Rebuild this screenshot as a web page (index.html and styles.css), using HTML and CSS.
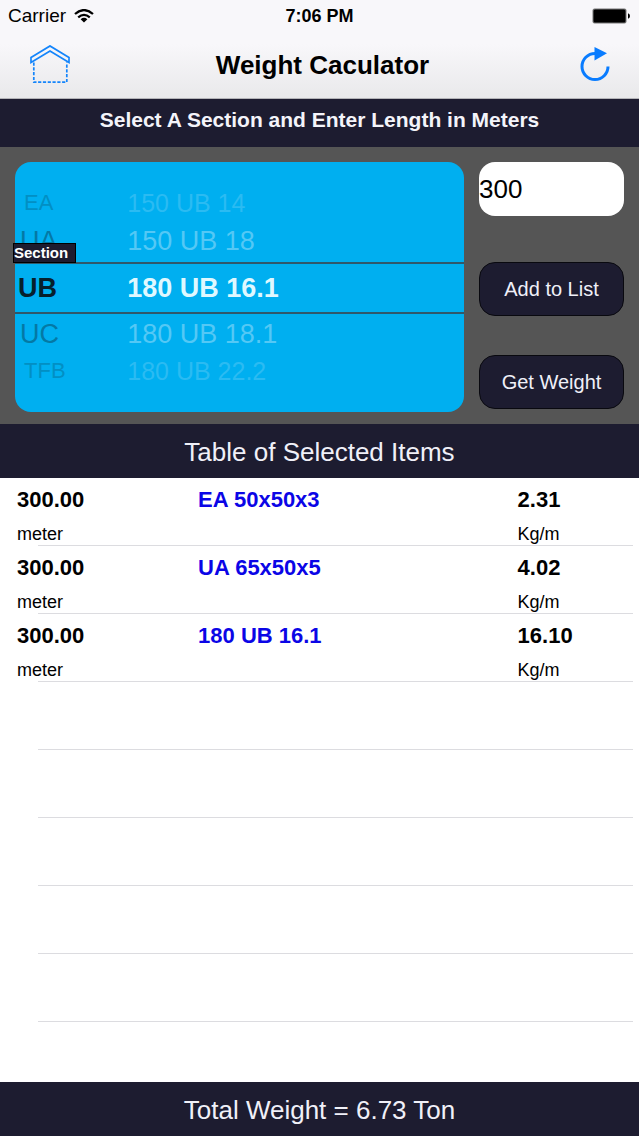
FILE: index.html
```html
<!DOCTYPE html>
<html lang="en">
<head>
<meta charset="utf-8">
<meta name="viewport" content="width=device-width, initial-scale=1">
<title>Weight Caculator</title>
<link rel="stylesheet" href="styles.css">
</head>
<body>
<header class="top">
  <div class="status">
    <span class="carrier">Carrier
      <svg class="wifi" width="20" height="14" viewBox="0 0 20 14" aria-hidden="true"><g fill="none" stroke="#000" stroke-width="2.3"><path d="M1 5Q10-2.8 19 5"/><path d="M4.2 8.3Q10 3.4 15.8 8.3"/></g><path d="M6.6 10.2Q10 7.4 13.4 10.2L10 13.6Z"/></svg>
    </span>
    <span class="clock">7:06 PM</span>
    <svg class="battery" width="39" height="16" viewBox="0 0 39 16" aria-hidden="true"><rect x=".5" y=".5" width="34" height="15" rx="2" fill="#777"/><rect x="1.5" y="1.5" width="32" height="13" rx="1.5"/><path d="M36 5.2Q38 5.7 38 8T36 10.8Z"/></svg>
  </div>
  <nav class="bar">
    <button class="icon" type="button" aria-label="Home">
      <svg width="40" height="40" viewBox="0 0 40 40" fill="none" stroke="#1485fb" stroke-width="1.7" aria-hidden="true"><path d="M1 12.5 20 .9 39 12.5V17.6L20 6 1 17.6Z"/><path d="M3.8 17.5V37.2H36.8V17.5" stroke-dasharray="3.2 1.6"/></svg>
    </button>
    <h1>Weight Caculator</h1>
    <button class="icon" type="button" aria-label="Reset">
      <svg width="40" height="40" viewBox="0 0 40 40" aria-hidden="true"><path d="M33 21.5A13 13 0 1 1 20 8.5" fill="none" stroke="#097cff" stroke-width="3"/><path d="M19.5 2 32 8.2 19.5 15.5Z" fill="#097cff"/></svg>
    </button>
  </nav>
</header>
<main>
  <h2 class="prompt">Select A Section and Enter Length in Meters</h2>
  <section class="panel">
    <div class="picker">
      <ul class="wheel" role="listbox" aria-label="Section">
        <li class="far" role="option">EA</li>
        <li class="near" role="option">UA</li>
        <li class="current" role="option" aria-selected="true">UB</li>
        <li class="near" role="option">UC</li>
        <li class="far" role="option">TFB</li>
      </ul>
      <ul class="wheel sizes" role="listbox" aria-label="Size">
        <li class="far" role="option">150 UB 14</li>
        <li class="near" role="option">150 UB 18</li>
        <li class="current" role="option" aria-selected="true">180 UB 16.1</li>
        <li class="near" role="option">180 UB 18.1</li>
        <li class="far" role="option">180 UB 22.2</li>
      </ul>
      <span class="tag">Section</span>
    </div>
    <form class="controls">
      <input class="length" type="text" value="300" aria-label="Length in meters">
      <button class="action" type="button">Add to List</button>
      <button class="action" type="button">Get Weight</button>
    </form>
  </section>
  <h2 class="heading">Table of Selected Items</h2>
  <table class="items">
    <tbody>
      <tr><td><b>300.00</b><small>meter</small></td><td class="name"><b>EA 50x50x3</b></td><td><b>2.31</b><small>Kg/m</small></td></tr>
      <tr><td><b>300.00</b><small>meter</small></td><td class="name"><b>UA 65x50x5</b></td><td><b>4.02</b><small>Kg/m</small></td></tr>
      <tr><td><b>300.00</b><small>meter</small></td><td class="name"><b>180 UB 16.1</b></td><td><b>16.10</b><small>Kg/m</small></td></tr>
      <tr><td colspan="3"></td></tr>
      <tr><td colspan="3"></td></tr>
      <tr><td colspan="3"></td></tr>
      <tr><td colspan="3"></td></tr>
      <tr><td colspan="3"></td></tr>
    </tbody>
  </table>
</main>
<footer class="heading">Total Weight = 6.73 Ton</footer>
</body>
</html>
```
FILE: styles.css
```css
* { box-sizing: border-box; }

body {
  margin: 0;
  min-height: 100vh;
  display: flex;
  flex-direction: column;
  background: #fff;
  color: #000;
  font-family: "Liberation Sans", Arial, sans-serif;
}

main { flex: 1; }
h1, h2, ul { margin: 0; padding: 0; }
button, input { font-family: inherit; border: 0; padding: 0; }

.top {
  background: linear-gradient(#f8f7fa 45%, #e9e9eb);
  border-bottom: 1px solid #b4b4b8;
}

.status {
  display: grid;
  grid-template-columns: 1fr auto 1fr;
  align-items: center;
  height: 32px;
  padding: 0 8px;
}

.carrier {
  display: flex;
  align-items: center;
  gap: 8px;
  font-size: 19px;
}

.clock { font-size: 18px; font-weight: bold; }
.battery { justify-self: end; }

.bar {
  display: grid;
  grid-template-columns: 1fr auto 1fr;
  align-items: center;
  height: 66px;
  padding: 0 24px 0 30px;
}

.bar h1 { font-size: 26px; line-height: 32px; }

.icon {
  width: 40px;
  height: 40px;
  background: none;
}

.icon:last-child { justify-self: end; }
.icon svg { display: block; }

.prompt {
  padding: 5px 16px 11px;
  background: #1d1c30;
  color: #f4f4fa;
  font-size: 21px;
  line-height: 32px;
  text-align: center;
}

.panel {
  display: flex;
  gap: 15px;
  padding: 15px 15px 12px;
  background: #555;
}

.picker {
  position: relative;
  flex: 1;
  display: grid;
  grid-template-columns: 1fr 3fr;
  padding: 24px 0;
  background: #00aff0;
  border-radius: 16px;
}

.wheel {
  display: grid;
  grid-template-rows: 34px 42px 52px 40px 34px;
  list-style: none;
  white-space: nowrap;
}

.wheel li { display: flex; align-items: center; }

.far {
  padding-left: 9px;
  color: #028fc4;
  font-size: 22px;
}

.near {
  padding-left: 5px;
  color: #0479a5;
  font-size: 27px;
}

.wheel .current {
  padding-left: 3px;
  border-top: 2px solid #30586b;
  border-bottom: 2px solid #30586b;
  color: #06202c;
  font-size: 27px;
  font-weight: bold;
}

.sizes .far { padding-left: 0; color: #2bbbf2; font-size: 25px; }
.sizes .near { padding-left: 0; color: #54c8f5; }
.sizes .current { padding-left: 0; color: #dff8ff; }

.tag {
  position: absolute;
  left: -2px;
  top: 81px;
  width: 63px;
  border: 1px solid #000;
  background: #1d1c30;
  color: #fff;
  font-size: 15px;
  font-weight: bold;
  line-height: 18px;
}

.controls {
  display: flex;
  flex-direction: column;
  gap: 39px;
  width: 145px;
}

.length {
  width: 100%;
  height: 54px;
  margin-bottom: 7px;
  border-radius: 16px;
  background: #fff;
  font-size: 26px;
}

.action {
  height: 54px;
  border: 1px solid #09090f;
  border-radius: 16px;
  background: #1d1c30;
  color: #f0f0f8;
  font-size: 20px;
}

.heading {
  padding: 10px 16px 8px;
  background: #1d1c30;
  color: #f0f0f8;
  font-size: 26px;
  font-weight: normal;
  line-height: 36px;
  text-align: center;
}

.items {
  width: 100%;
  border-collapse: collapse;
  table-layout: fixed;
}

.items tr {
  height: 68px;
  background: linear-gradient(#dcdce0, #dcdce0) 38px 67px / calc(100% - 44px) 1px no-repeat;
}

.items td { padding: 0; vertical-align: top; }
.items td:nth-child(1) { width: 31%; padding-left: 17px; }
.items td:nth-child(2) { width: 50%; }
.name { color: #0b05e6; }

.items b, .items small { display: block; }
.items b { font-size: 22px; line-height: 44px; }
.items small { font-size: 18px; line-height: 24px; }
```
